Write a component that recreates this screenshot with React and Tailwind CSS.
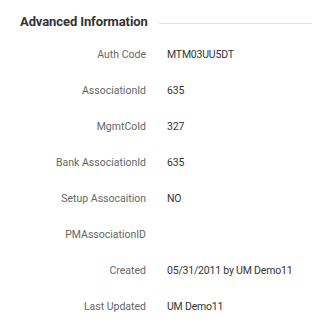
const rows = [
  ['Auth Code', 'MTM03UU5DT'],
  ['AssociationId', '635'],
  ['MgmtCoId', '327'],
  ['Bank AssociationId', '635'],
  ['Setup Assocaition', 'NO'],
  ['PMAssociationID', ''],
  ['Created', '05/31/2011 by UM Demo11'],
  ['Last Updated', 'UM Demo11'],
];

export default function App() {
  return (
    <div className="w-[312px] h-[326px] bg-white overflow-hidden" style={{ fontFamily: 'Roboto, "Liberation Sans", sans-serif' }}>
      {/* Section header */}
      <div className="flex items-start pl-5 pt-[13px] h-[37px]">
        <h3 className="text-[13px] leading-[18px] font-bold text-[#333] tracking-[-0.1px] whitespace-nowrap">Advanced Information</h3>
        <div className="flex-1 h-px bg-[#d6e0ee] ml-[11px] mt-[10px]" />
      </div>

      {/* Details */}
      <div className="flex flex-col">
        {rows.map(([label, value]) => (
          <div key={label} className="flex items-center h-[36px] text-[10.5px]">
            <div className="w-[146px] shrink-0 text-right text-[#666]">{label}</div>
            <div className="pl-[21px] text-[#333] tracking-[-0.2px]">{value}</div>
          </div>
        ))}
      </div>
    </div>
  );
}
